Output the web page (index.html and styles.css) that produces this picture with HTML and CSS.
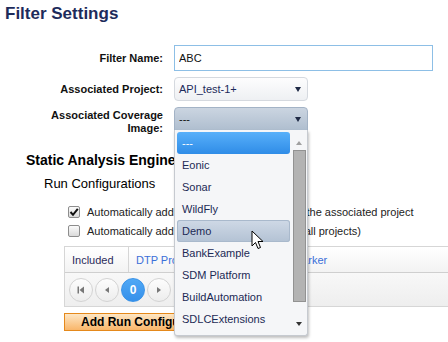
FILE: index.html
```html
<!DOCTYPE html>
<html lang="en">
<head>
    <meta charset="UTF-8">
    <meta name="viewport" content="width=device-width, initial-scale=1.0">
    <title>Filter Settings</title>
    <link rel="stylesheet" href="styles.css">
</head>
<body>
    <h1 class="page-title">Filter Settings</h1>

    <div class="form-grid">
        <label class="form-label">Filter Name:</label>
        <div class="form-field">
            <input type="text" class="text-input" value="ABC">
        </div>

        <label class="form-label">Associated Project:</label>
        <div class="form-field">
            <div class="select-box">
                <span>API_test-1+</span>
                <span class="select-arrow"></span>
            </div>
        </div>

        <label class="form-label label-multi">Associated Coverage<br>Image:</label>
        <div class="form-field dropdown-anchor">
            <div class="select-box select-open">
                <span>---</span>
                <span class="select-arrow"></span>
            </div>

            <!-- open dropdown list -->
            <div class="dropdown-list">
                <div class="dropdown-items">
                    <div class="dropdown-item selected">---</div>
                    <div class="dropdown-item">Eonic</div>
                    <div class="dropdown-item">Sonar</div>
                    <div class="dropdown-item">WildFly</div>
                    <div class="dropdown-item hovered">Demo</div>
                    <div class="dropdown-item">BankExample</div>
                    <div class="dropdown-item">SDM Platform</div>
                    <div class="dropdown-item">BuildAutomation</div>
                    <div class="dropdown-item">SDLCExtensions</div>
                </div>
                <div class="dropdown-scroll">
                    <span class="scroll-up"></span>
                    <span class="scroll-thumb"></span>
                    <span class="scroll-down"></span>
                </div>
            </div>

            <svg class="mouse-cursor" width="13" height="20" viewBox="0 0 13 20">
                <path d="M1 1 L1 16 L4.5 12.5 L7 18.5 L9.5 17.5 L7 11.5 L12 11.5 Z" fill="#fff" stroke="#000" stroke-width="1" stroke-linejoin="round"/>
            </svg>
        </div>
    </div>

    <h2 class="section-title">Static Analysis Engine</h2>
    <h3 class="sub-title">Run Configurations</h3>

    <div class="check-list">
        <div class="check-row">
            <span class="check-box checked">
                <svg width="10" height="10" viewBox="0 0 10 10"><path d="M1.5 5 L4 7.8 L8.8 1.8" fill="none" stroke="#111" stroke-width="2"/></svg>
            </span>
            <span class="check-text">Automatically add all run configurations from the associated project</span>
        </div>
        <div class="check-row">
            <span class="check-box"></span>
            <span class="check-text">Automatically add new run configuration (for all projects)</span>
        </div>
    </div>

    <div class="config-table">
        <div class="table-head">
            <div class="head-cell col-included">Included</div>
            <div class="head-cell col-project">DTP Project</div>
            <div class="head-cell col-marker">Marker</div>
        </div>
        <div class="table-pager">
            <span class="pager-btn">
                <svg width="8" height="8" viewBox="0 0 8 8"><rect x="0.5" y="0.5" width="1.5" height="7" fill="#777"/><path d="M7 0.5 L7 7.5 L2.5 4 Z" fill="#777"/></svg>
            </span>
            <span class="pager-btn">
                <svg width="8" height="8" viewBox="0 0 8 8"><path d="M6 1 L6 7 L2 4 Z" fill="#777"/></svg>
            </span>
            <span class="pager-btn pager-current">0</span>
            <span class="pager-btn">
                <svg width="8" height="8" viewBox="0 0 8 8"><path d="M2 1 L2 7 L6 4 Z" fill="#777"/></svg>
            </span>
        </div>
    </div>

    <button class="add-button">Add Run Configuration</button>
</body>
</html>
```

FILE: styles.css
```css
* {
    box-sizing: border-box;
}

body {
    margin: 0;
    width: 448px;
    height: 342px;
    overflow: hidden;
    font-family: "Liberation Sans", Arial, sans-serif;
    background-color: #fff;
    color: #111;
}

.page-title {
    margin: 0;
    padding: 4px 0 0 5px;
    font-size: 17px;
    line-height: 20px;
    font-weight: bold;
    color: #1d2b5b;
}

/* form */

.form-grid {
    display: grid;
    grid-template-columns: 163px 260px;
    grid-template-rows: 26px 24px 24px;
    column-gap: 11px;
    row-gap: 6px;
    margin-top: 21px;
}

.form-label {
    align-self: center;
    text-align: right;
    font-size: 11px;
    font-weight: bold;
    color: #111;
}

.label-multi {
    align-self: start;
    padding-top: 2px;
    line-height: 13px;
}

.text-input {
    display: block;
    width: 259px;
    height: 26px;
    padding: 0 4px;
    border: 1px solid #8dbfe6;
    font-family: inherit;
    font-size: 11px;
    color: #111;
    outline: none;
}

.select-box {
    display: flex;
    align-items: center;
    justify-content: space-between;
    width: 134px;
    height: 24px;
    padding: 0 6px 0 4px;
    border: 1px solid #d5d9df;
    border-radius: 4px;
    background: linear-gradient(#fdfdfe, #eef0f3);
    font-size: 11px;
    color: #1d2b5b;
}

.select-open {
    border-color: #a3b3c6;
    border-radius: 4px 4px 0 0;
    background: linear-gradient(#cbd5e1, #afbecf);
    color: #111;
}

.select-arrow {
    width: 0;
    height: 0;
    border-left: 3.5px solid transparent;
    border-right: 3.5px solid transparent;
    border-top: 5px solid #1f2a45;
}

/* dropdown */

.dropdown-anchor {
    position: relative;
    align-self: start;
}

.dropdown-list {
    position: absolute;
    left: 0;
    top: 23px;
    z-index: 5;
    display: flex;
    width: 134px;
    height: 206px;
    border: 1px solid #c6cad0;
    border-top: none;
    border-radius: 0 0 3px 3px;
    background-color: #f5f6f8;
    box-shadow: 1px 2px 3px rgba(0, 0, 0, 0.25);
}

.dropdown-items {
    width: 116px;
    padding: 2px 0 0 2px;
}

.dropdown-item {
    width: 113px;
    height: 22px;
    padding-left: 5px;
    line-height: 22px;
    font-size: 11px;
    color: #1c2a55;
    border-radius: 3px;
}

.dropdown-item.selected {
    background: linear-gradient(#58b0fa, #2f8ce7);
    color: #fff;
}

.dropdown-item.hovered {
    background: linear-gradient(#cfd9e6, #b3c2d4);
    box-shadow: inset 0 0 0 1px #a9b9cc;
}

.dropdown-scroll {
    display: flex;
    flex-direction: column;
    align-items: center;
    width: 16px;
}

.scroll-up {
    margin-top: 11px;
    width: 0;
    height: 0;
    border-left: 3.5px solid transparent;
    border-right: 3.5px solid transparent;
    border-bottom: 4px solid #a0a0a0;
}

.scroll-thumb {
    margin-top: 5px;
    width: 13px;
    height: 152px;
    background-color: #b3b3b3;
    border: 1px solid #929292;
}

.scroll-down {
    margin-top: 20px;
    width: 0;
    height: 0;
    border-left: 3.5px solid transparent;
    border-right: 3.5px solid transparent;
    border-top: 4px solid #333;
}

.mouse-cursor {
    position: absolute;
    left: 77px;
    top: 123px;
    z-index: 6;
}

/* static analysis section */

.section-title {
    margin: 21px 0 0 0;
    padding-left: 26px;
    font-size: 14px;
    line-height: 17px;
    font-weight: bold;
    color: #000;
}

.sub-title {
    margin: 7px 0 0 0;
    padding-left: 44px;
    font-size: 13px;
    line-height: 16px;
    font-weight: normal;
    color: #000;
}

.check-list {
    margin-top: 10px;
    padding-left: 68px;
}

.check-row {
    display: flex;
    align-items: center;
    gap: 7px;
    height: 19px;
    white-space: nowrap;
}

.check-box {
    display: flex;
    align-items: center;
    justify-content: center;
    flex: none;
    width: 12px;
    height: 12px;
    border: 1px solid #8d8d8d;
    border-radius: 2px;
    background: linear-gradient(#fbfbfb, #dadada);
}

.check-text {
    font-size: 11px;
    color: #222;
}

/* table */

.config-table {
    margin: 6px 0 0 64px;
    width: 400px;
    border-left: 1px solid #d6d6d6;
}

.table-head {
    display: flex;
    height: 27px;
    border-top: 1px solid #d6d6d6;
    border-bottom: 1px solid #cfcfcf;
    background: linear-gradient(#fff, #f3f3f3);
}

.head-cell {
    display: flex;
    align-items: center;
    font-size: 11px;
    color: #3a6fd8;
}

.col-included {
    width: 64px;
    padding-left: 7px;
    border-right: 1px solid #d6d6d6;
    color: #2a2a5a;
}

.col-project {
    width: 157px;
    padding-left: 7px;
}

.col-marker {
    padding-left: 7px;
}

.table-pager {
    display: flex;
    align-items: center;
    gap: 2px;
    height: 34px;
    padding-left: 4px;
    border-bottom: 1px solid #d6d6d6;
    background: linear-gradient(#f8f8f8, #eeeeee);
}

.pager-btn {
    display: flex;
    align-items: center;
    justify-content: center;
    width: 24px;
    height: 24px;
    border: 1px solid #d3d3d3;
    border-radius: 50%;
    background: linear-gradient(#fdfdfd, #ededed);
}

.pager-current {
    border-color: #3a93e8;
    background: linear-gradient(#50a8f5, #3590ea);
    color: #fff;
    font-size: 12px;
    font-weight: bold;
}

.add-button {
    display: block;
    margin: 6px 0 0 64px;
    height: 18px;
    padding: 0 16px;
    border: 1px solid #e5891b;
    background: linear-gradient(#fde6c4, #f9b66a);
    font-family: inherit;
    font-size: 12px;
    font-weight: bold;
    color: #000;
}
```
